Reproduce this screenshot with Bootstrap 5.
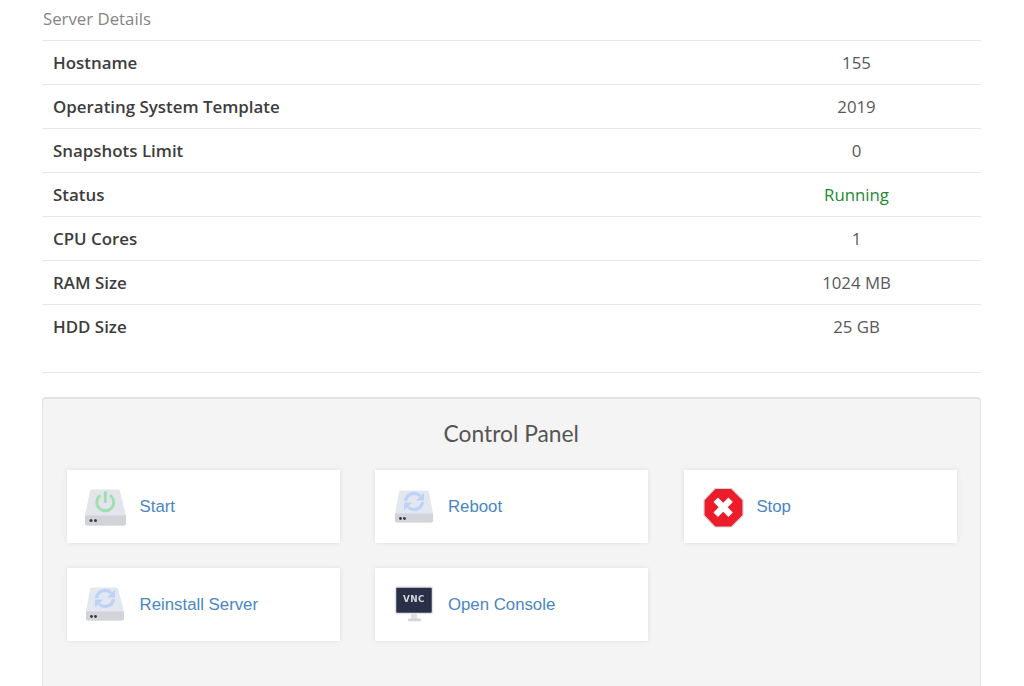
<!DOCTYPE html>
<html lang="en">
<head>
<meta charset="utf-8">
<title>Server Details</title>
<link href="https://cdn.jsdelivr.net/npm/bootstrap@5.3.0/dist/css/bootstrap.min.css" rel="stylesheet">
<style>
html,body{height:686px;overflow:hidden}
body{font-family:"Open Sans",sans-serif;font-size:16.8px;color:#58595b;background:#fff}
.page-wrap{padding:0 43.5px 0 42px}
.sect-title{font-size:16.8px;line-height:24px;color:#858585;margin:0;padding:7px 1px 9px;font-weight:400}
.info-table{margin:0;border-collapse:collapse;width:100%;table-layout:fixed}
.info-table td{padding:10px;line-height:23px;border-top:1px solid #e6e6e6;border-bottom:0;color:#58595b;background:transparent;box-shadow:none}
.info-table td:first-child{font-weight:600;color:#3d3d3d;font-size:16.9px;padding-left:11px}
.info-table td:last-child{width:249px;text-align:center;padding-left:11px}
.info-table td.state-ok{color:#22892f}
.sep{margin:24px 0 24px;border:0;border-top:1px solid #e6e6e6;opacity:1}
.ctl-panel{background:#f4f4f4;border:1px solid #e3e3e3;border-top:2px solid #e3e3e3;border-radius:4px;padding:20px 24px 44px;height:340px}
.ctl-title{font-family:"Lato",sans-serif;font-weight:400;font-size:22.8px;line-height:28px;text-align:center;color:#555;margin:0 0 23px}
.ctl-grid{display:grid;grid-template-columns:repeat(3,273px);column-gap:35.4px;row-gap:25px}
.ctl-item{display:flex;align-items:center;height:73px;padding-left:17px;background:#fff;box-shadow:0 0 5px rgba(0,0,0,.09);text-decoration:none;font-family:"Liberation Sans",sans-serif;font-size:16.8px;color:#4a86c4}
.ctl-ico{width:44px;height:44px;flex:none;margin-right:11.6px;filter:blur(.3px)}
</style>
</head>
<body>
<div class="page-wrap">
  <h3 class="sect-title">Server Details</h3>
  <table class="table info-table">
    <tbody>
      <tr><td>Hostname</td><td>155</td></tr>
      <tr><td>Operating System Template</td><td>2019</td></tr>
      <tr><td>Snapshots Limit</td><td>0</td></tr>
      <tr><td>Status</td><td class="state-ok">Running</td></tr>
      <tr><td>CPU Cores</td><td>1</td></tr>
      <tr><td>RAM Size</td><td>1024 MB</td></tr>
      <tr><td>HDD Size</td><td>25 GB</td></tr>
    </tbody>
  </table>
  <hr class="sep">
  <div class="ctl-panel">
    <h4 class="ctl-title">Control Panel</h4>
    <div class="ctl-grid">
      <a class="ctl-item" href="#">
        <svg class="ctl-ico" viewBox="0 0 44 44">
          <path d="M8 4.500h26a2 2 0 0 1 2 1.500l6 24.500v8a2 2 0 0 1-2 2H3a2 2 0 0 1-2-2v-8L6 6a2 2 0 0 1 2-1.500z" fill="#e3e5ea"/>
          <path d="M1 30.500h41v8a2 2 0 0 1-2 2H3a2 2 0 0 1-2-2z" fill="#d2d3d8"/>
          <circle cx="7" cy="35.500" r="1.500" fill="#333a4d"/><circle cx="11.500" cy="35.500" r="1.500" fill="#333a4d"/>
          <path d="M15.500 11a8.500 8.500 0 1 0 11.500 0" fill="none" stroke="#9fe0b2" stroke-width="3" stroke-linecap="round"/>
          <path d="M21.300 7.500v9" fill="none" stroke="#9fe0b2" stroke-width="3" stroke-linecap="round"/>
        </svg>
        <span>Start</span>
      </a>
      <a class="ctl-item" href="#">
        <svg class="ctl-ico" viewBox="0 0 44 44">
          <path d="M9 5.500h26a2 2 0 0 1 2 1.500l4 21.500v7a2 2 0 0 1-2 2H5a2 2 0 0 1-2-2v-7L7 7a2 2 0 0 1 2-1.500z" fill="#e3e7f0"/>
          <path d="M3 28.500h38v7a2 2 0 0 1-2 2H5a2 2 0 0 1-2-2z" fill="#d3d4d9"/>
          <circle cx="8.500" cy="33.500" r="1.400" fill="#333a4d"/><circle cx="12.500" cy="33.500" r="1.400" fill="#333a4d"/>
          <path d="M13.500 16a8.500 8.500 0 0 1 14.500-5" fill="none" stroke="#bcd2f7" stroke-width="3.200"/>
          <path d="M32 7.500v8h-8z" fill="#bcd2f7"/>
          <path d="M30.500 17a8.500 8.500 0 0 1-14.500 5" fill="none" stroke="#bcd2f7" stroke-width="3.200"/>
          <path d="M12 25.500v-8h8z" fill="#bcd2f7"/>
        </svg>
        <span>Reboot</span>
      </a>
      <a class="ctl-item" href="#">
        <svg class="ctl-ico" viewBox="0 0 44 44">
          <path d="M14 3.500h16.500L42 15v15.500L30.500 42H14L3 30.500V15z" fill="#ed1c2a" stroke="#d4d5da" stroke-width="1.200"/>
          <path d="M12.500 17l4.500-4.500 5.200 5.200 5.200-5.200 4.500 4.500-5.200 5.200 5.200 5.200-4.500 4.500-5.200-5.200-5.200 5.200-4.500-4.500 5.200-5.200z" fill="#fff"/>
        </svg>
        <span>Stop</span>
      </a>
      <a class="ctl-item" href="#">
        <svg class="ctl-ico" viewBox="0 0 44 44">
          <path d="M8 4.500h24a2 2 0 0 1 2 1.500l6 22.500v7a2 2 0 0 1-2 2H4a2 2 0 0 1-2-2v-7L6 6a2 2 0 0 1 2-1.500z" fill="#e3e7f0"/>
          <path d="M2 28.500h38v7a2 2 0 0 1-2 2H4a2 2 0 0 1-2-2z" fill="#d3d4d9"/>
          <circle cx="7.500" cy="33.500" r="1.400" fill="#333a4d"/><circle cx="11.500" cy="33.500" r="1.400" fill="#333a4d"/>
          <path d="M12.500 15a8.500 8.500 0 0 1 14.500-5" fill="none" stroke="#bcd2f7" stroke-width="3.200"/>
          <path d="M31 6.500v8h-8z" fill="#bcd2f7"/>
          <path d="M29.500 16a8.500 8.500 0 0 1-14.500 5" fill="none" stroke="#bcd2f7" stroke-width="3.200"/>
          <path d="M11 24.500v-8h8z" fill="#bcd2f7"/>
        </svg>
        <span>Reinstall Server</span>
      </a>
      <a class="ctl-item" href="#">
        <svg class="ctl-ico" viewBox="0 0 44 44">
          <rect x="3.500" y="4" width="37" height="26.500" rx="1.500" fill="#2a3048" stroke="#e3e5ea" stroke-width="1.500"/>
          <text x="22" y="19" text-anchor="middle" font-family="DejaVu Sans, sans-serif" font-weight="700" font-size="8.800" letter-spacing=".4" fill="#d4d6dc">VNC</text>
          <rect x="19" y="31" width="6" height="5" fill="#e0e1e5"/>
          <rect x="16" y="35.500" width="13" height="2.800" rx="1" fill="#d2d4d9"/>
        </svg>
        <span>Open Console</span>
      </a>
    </div>
  </div>
</div>
<script src="https://cdn.jsdelivr.net/npm/bootstrap@5.3.0/dist/js/bootstrap.bundle.min.js"></script>
</body>
</html>
